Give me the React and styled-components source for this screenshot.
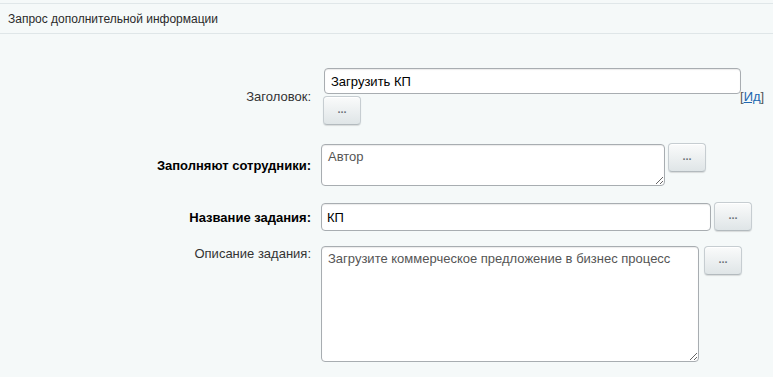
import styled, { createGlobalStyle } from "styled-components";

const Global = createGlobalStyle`
  html, body {
    margin: 0;
    padding: 0;
    background: #f5f9f9;
  }
  body {
    font-family: "Liberation Sans", Arial, sans-serif;
    font-size: 13px;
    color: #000;
  }
`;

export default function App() {
  return (
    <>
      <Global />
      <Page>
        <Header>Запрос дополнительной информации</Header>
        <Form>
          <Row $top={34}>
            <Label>Заголовок:</Label>
            <TitleCell>
              <FieldStack>
                <Input $width={417} $height={26} $pad={6} defaultValue="Загрузить КП" readOnly />
                <DotsButton $mt={2} $ml={-1}>...</DotsButton>
              </FieldStack>
              <IdLink>
                [<a href="#">Ид</a>]
              </IdLink>
            </TitleCell>
          </Row>

          <Row $top={19}>
            <Label $bold>Заполняют сотрудники:</Label>
            <Value>
              <Area $width={344} $height={42} defaultValue="Автор" readOnly />
              <DotsButton $ml={3} $mt={-1}>...</DotsButton>
            </Value>
          </Row>

          <Row $top={17}>
            <Label $bold>Название задания:</Label>
            <Value>
              <Input $width={390} $height={28} $pad={5} defaultValue="КП" readOnly />
              <DotsButton $ml={3} $mt={-1}>...</DotsButton>
            </Value>
          </Row>

          <Row $top={15} $alignTop>
            <Label $padTop={0}>Описание задания:</Label>
            <Value>
              <Area
                $width={378}
                $height={116}
                defaultValue="Загрузите коммерческое предложение в бизнес процесс"
                readOnly
              />
              <DotsButton $ml={5} $mt={0}>...</DotsButton>
            </Value>
          </Row>
        </Form>
      </Page>
    </>
  );
}

const Page = styled.div`
  width: 773px;
  height: 377px;
  overflow: hidden;
  background: #f5f9f9;
`;

const Header = styled.div`
  margin-top: 3px;
  height: 29px;
  padding-left: 8px;
  border-top: 1px solid #e0e7e9;
  border-bottom: 1px solid #dfe6e8;

  display: flex;
  align-items: center;

  font-size: 12px;
  color: #2a2a2a;
`;

const Form = styled.div`
  display: flex;
  flex-direction: column;
`;

const Row = styled.div`
  margin-top: ${(p) => p.$top}px;

  display: grid;
  grid-template-columns: 311px 1fr;
  column-gap: 10px;
  align-items: ${(p) => (p.$alignTop ? "start" : "center")};
`;

const Label = styled.div`
  padding-top: ${(p) => p.$padTop || 0}px;
  text-align: right;
  font-size: 13px;
  font-weight: ${(p) => (p.$bold ? 700 : 400)};
  color: ${(p) => (p.$bold ? "#000" : "#333")};
`;

const Value = styled.div`
  display: flex;
  align-items: flex-start;
`;

const TitleCell = styled.div`
  padding-left: 3px;
  display: flex;
  align-items: center;
`;

const FieldStack = styled.div`
  width: 417px;
  display: flex;
  flex-direction: column;
  align-items: flex-start;
`;

const fieldBase = `
  box-sizing: border-box;
  margin: 0;
  background: #fff;
  border: 1px solid #a8adb1;
  border-radius: 4px;
  box-shadow: inset 0 1px 1px rgba(0, 0, 0, 0.08);
  font-family: "Liberation Sans", Arial, sans-serif;
  font-size: 13px;
  outline: none;
`;

const Input = styled.input`
  ${fieldBase}
  width: ${(p) => p.$width}px;
  height: ${(p) => p.$height}px;
  padding: 0 ${(p) => p.$pad}px;
  color: #000;
`;

const Area = styled.textarea`
  ${fieldBase}
  display: block;
  width: ${(p) => p.$width}px;
  height: ${(p) => p.$height}px;
  padding: 4px 6px;
  color: #555;
  resize: both;
`;

const DotsButton = styled.button`
  box-sizing: border-box;
  width: 38px;
  height: 29px;
  margin: ${(p) => p.$mt || 0}px 0 0 ${(p) => p.$ml || 0}px;
  padding: 0 0 3px;
  flex-shrink: 0;

  background: linear-gradient(to bottom, #fafbfb, #dfe5e7);
  border: 1px solid #c6cdd1;
  border-bottom-color: #b3babe;
  border-radius: 4px;
  box-shadow: 0 1px 1px rgba(0, 0, 0, 0.12), inset 0 1px 0 #fff;

  font-family: "Liberation Sans", Arial, sans-serif;
  font-size: 11px;
  font-weight: 700;
  color: #6a7278;
`;

const IdLink = styled.span`
  margin-left: -1px;
  margin-top: -1px;
  font-size: 13px;
  color: #555;

  a {
    color: #2067b0;
    text-decoration: underline;
  }
`;
